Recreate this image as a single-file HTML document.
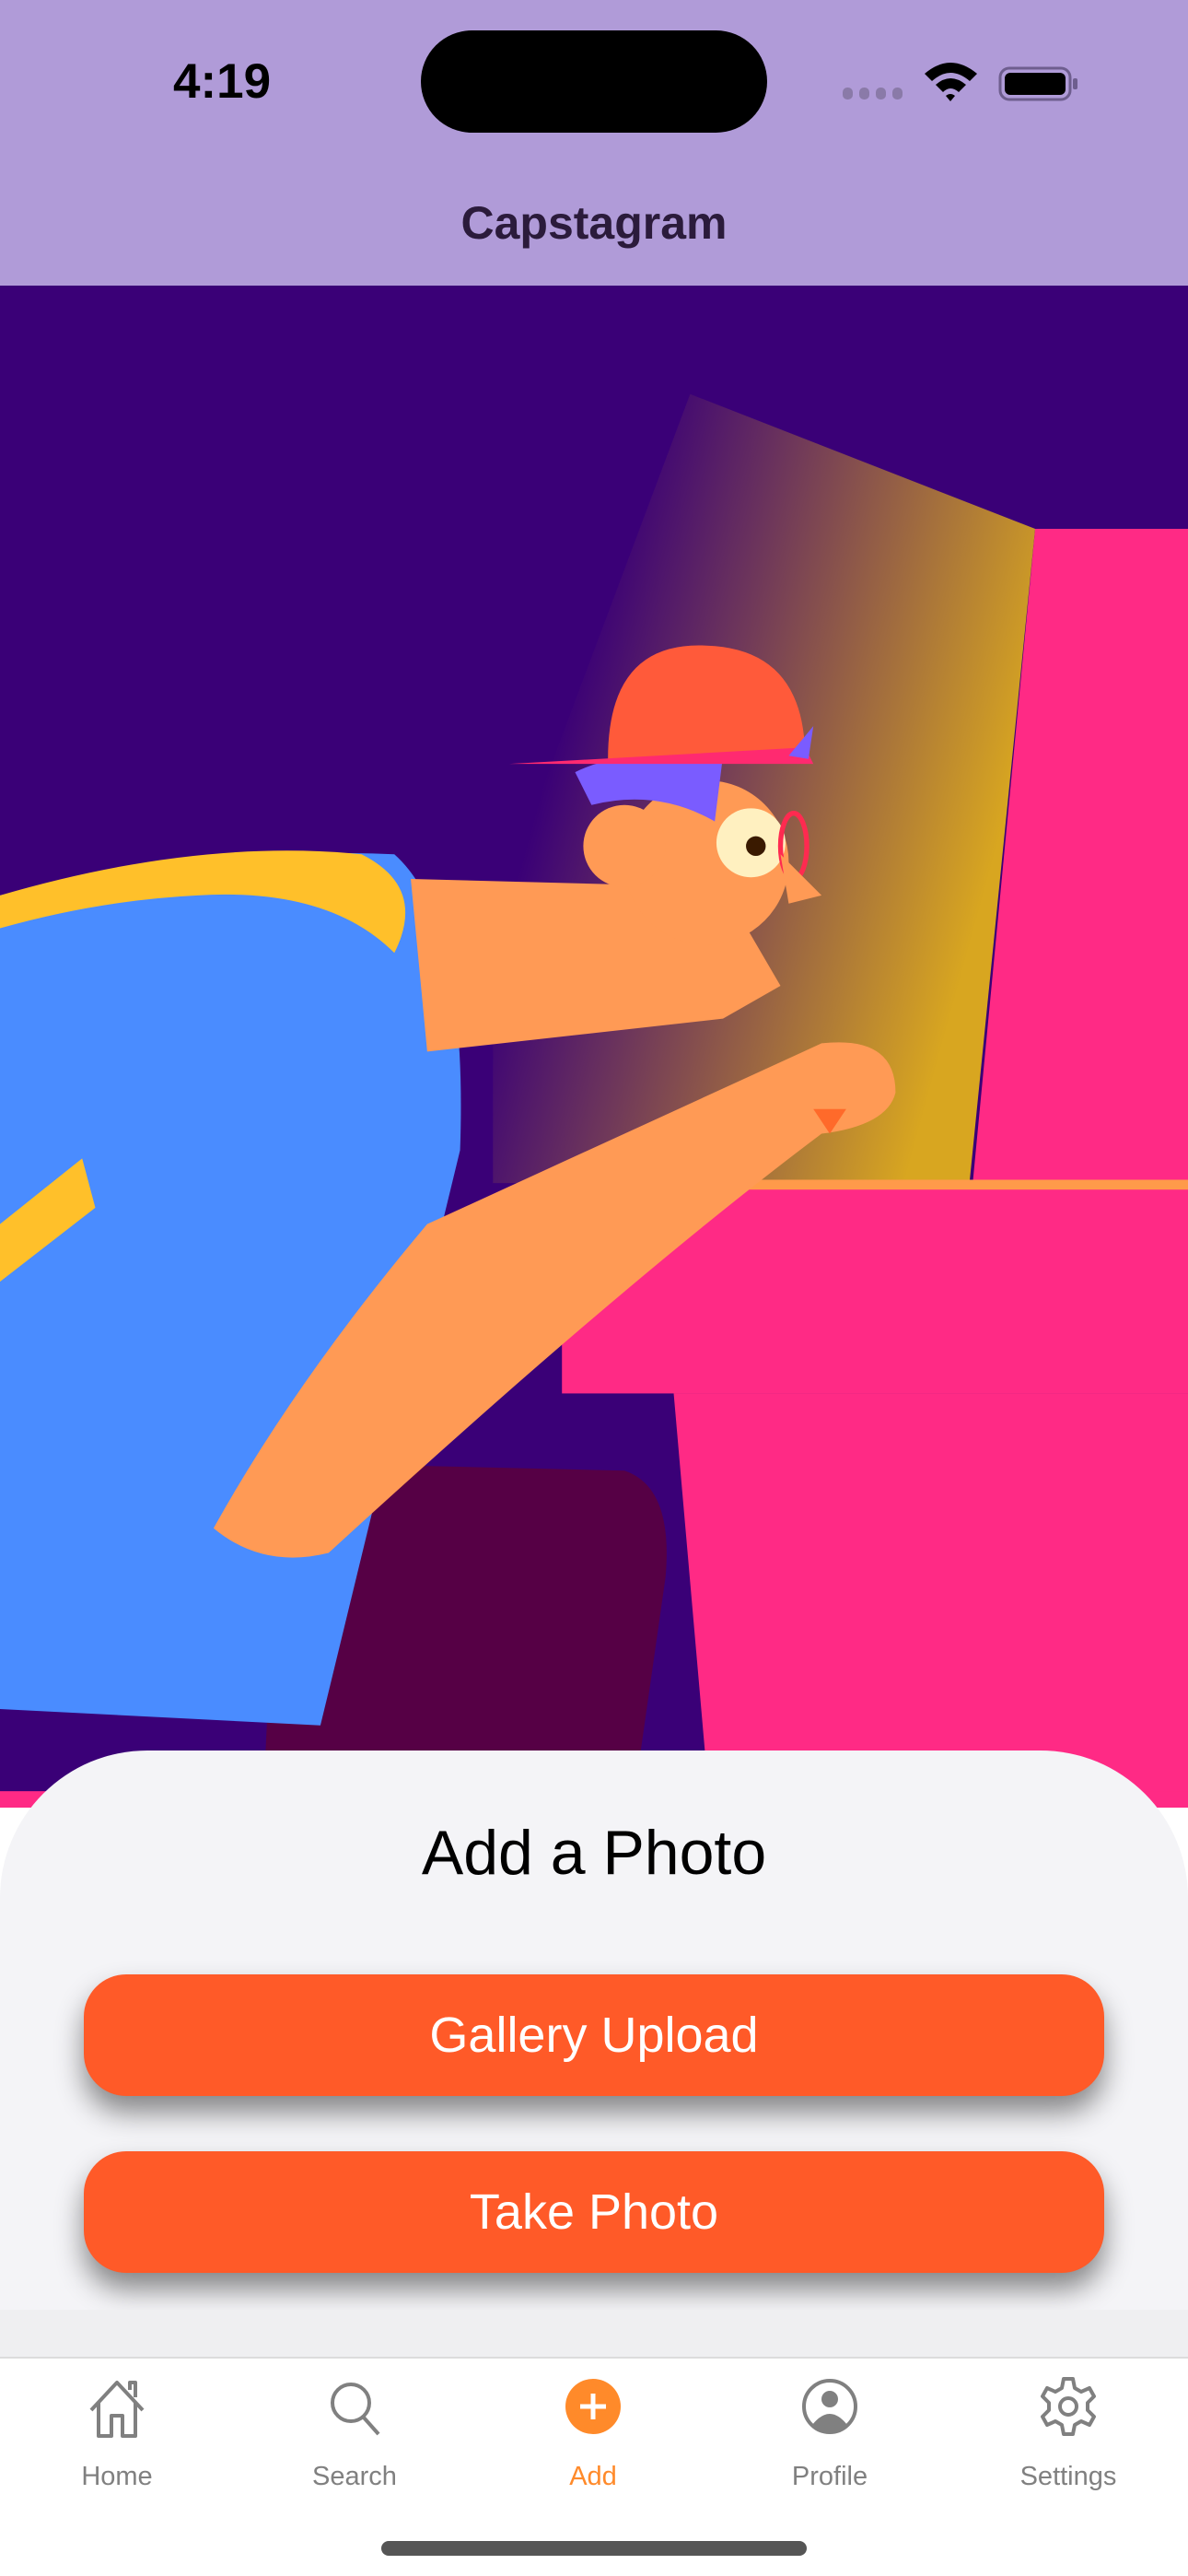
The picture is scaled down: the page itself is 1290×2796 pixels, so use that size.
<!DOCTYPE html>
<html><head><meta charset="utf-8">
<style>
*{margin:0;padding:0;box-sizing:border-box}
body{width:1290px;height:2796px;position:relative;overflow:hidden;background:#fff;font-family:"Liberation Sans",sans-serif}
.hdr{position:absolute;left:0;top:0;width:1290px;height:311px;background:#b09bd8}
.time{position:absolute;left:188px;top:58px;font-size:53px;font-weight:bold;color:#000}
.island{position:absolute;left:457px;top:33px;width:376px;height:111px;background:#000;border-radius:56px}
.title{position:absolute;left:0;width:1290px;top:213px;text-align:center;font-size:50px;font-weight:bold;color:#2b1b3b}
.ill{position:absolute;left:0;top:310px}
.sheet{position:absolute;left:0;top:1900px;width:1290px;height:660px;background:#f4f4f7;border-radius:160px 160px 0 0}
.sheet h1{position:absolute;top:72px;width:100%;text-align:center;font-size:68px;font-weight:normal;color:#000}
.btn{position:absolute;left:91px;width:1108px;height:132px;background:#ff5a28;border-radius:46px;color:#fff;font-size:54px;text-align:center;line-height:132px;box-shadow:0 18px 30px rgba(0,0,0,.45)}
.tab{position:absolute;left:0;top:2558px;width:1290px;height:238px;background:#fff;border-top:2px solid #dcdcdc}
.it{position:absolute;top:0;width:200px;margin-left:-100px;text-align:center}
.it svg{position:absolute;left:68px;top:20px}
.it span{position:absolute;top:112px;left:0;width:200px;font-size:29px;color:#808080}
.bar{position:absolute;left:414px;top:2758px;width:462px;height:16px;border-radius:8px;background:#555}
</style></head><body>
<div class="hdr">
<div class="time">4:19</div>
<div class="island"></div>
<svg style="position:absolute;left:912px;top:62px" width="270" height="52" viewBox="0 0 270 52">
<g fill="#8a7aa8"><rect x="3" y="33" width="11" height="13" rx="5"/><rect x="21" y="33" width="11" height="13" rx="5"/><rect x="39" y="33" width="11" height="13" rx="5"/><rect x="57" y="33" width="11" height="13" rx="5"/></g>
<path d="M92 18 Q120 -6 149 18 L141 26 Q120 8 100 26Z M104 30 Q120 16 137 30 L129 38 Q120 30 112 38Z M120 48 L115 42 Q120 38 125 42Z" fill="#000"/>
<rect x="174" y="12" width="76" height="34" rx="10" fill="none" stroke="#6e5e8e" stroke-width="3"/>
<rect x="179" y="17" width="66" height="24" rx="6" fill="#000"/>
<rect x="253" y="23" width="5" height="12" rx="2" fill="#6e5e8e"/>
</svg>
<div class="title">Capstagram</div>
</div>
<svg class="ill" width="1290" height="1652" viewBox="0 174 723 926" preserveAspectRatio="none">
<defs>
<linearGradient id="beam" x1="0" y1="0" x2="1" y2="0.4"><stop offset="0.25" stop-color="#3a0077"/><stop offset="1" stop-color="#d8a620"/></linearGradient>
</defs>
<rect x="0" y="174" width="723" height="926" fill="#3a0077"/>
<polygon points="420,240 630,322 590,720 300,720 300,560" fill="url(#beam)"/>
<polygon points="630,322 723,322 723,720 592,720" fill="#ff2a85"/>
<rect x="342" y="718" width="381" height="130" fill="#ff2a85"/>
<rect x="342" y="718" width="381" height="6" fill="#ff9a4a"/>
<polygon points="410,848 723,848 723,1100 432,1100" fill="#ff2a85"/>
<path d="M170 890 L380 895 Q410 905 405 960 L385 1100 L160 1100Z" fill="#560045"/>
<path d="M0 545 Q120 515 240 520 Q285 560 280 700 L195 1050 L0 1040Z" fill="#4a8cff"/>
<path d="M0 545 Q120 510 220 520 Q260 540 240 580 Q200 540 120 545 Q60 548 0 565Z" fill="#ffc02a"/>
<polygon points="0,745 50,705 58,735 0,780" fill="#ffc02a"/>
<polygon points="250,535 440,540 475,600 440,620 260,640" fill="#ff9a55"/>
<circle cx="430" cy="525" r="50" fill="#ff9a55"/>
<circle cx="380" cy="515" r="25" fill="#ff9a55"/>
<path d="M350 470 Q380 455 440 460 L435 500 Q400 480 360 490Z" fill="#7a5cff"/>
<path d="M370 462 Q370 390 430 393 Q490 395 490 462Z" fill="#ff5a3a"/>
<polygon points="310,465 490,455 495,465 310,465" fill="#ff2a70"/>
<path d="M480 460 L495 442 L492 462Z" fill="#7a5cff"/>
<circle cx="457" cy="513" r="21" fill="#fff0c0"/>
<circle cx="460" cy="515" r="6" fill="#3a1a00"/>
<ellipse cx="483" cy="515" rx="8" ry="20" fill="none" stroke="#ff2a50" stroke-width="3"/>
<path d="M475 520 L500 545 L480 550Z" fill="#ff9a55"/>
<path d="M260 745 Q380 690 500 635 Q545 630 545 665 Q540 685 500 690 Q380 780 200 945 Q160 955 130 930 Q180 840 260 745Z" fill="#ff9a55"/>
<path d="M495 675 L515 675 L505 690Z" fill="#ff6a2a"/>
<rect x="0" y="1090" width="723" height="10" fill="#ff2a85"/>
</svg>
<div class="sheet">
<h1>Add a Photo</h1>
<div class="btn" style="top:243px">Gallery Upload</div>
<div class="btn" style="top:435px">Take Photo</div>
</div>
<div style="position:absolute;left:0;top:2507px;width:1290px;height:51px;background:#efeff1"></div>
<div class="tab">
<div class="it" style="left:127px"><svg width="64" height="70" viewBox="0 0 64 70"><path d="M4 36 L32 6 L60 36 M12 28 V64 H26 V42 H38 V64 H52 V28 M46 14 V6 H52 V22" fill="none" stroke="#808080" stroke-width="4" stroke-linejoin="round"/></svg><span>Home</span></div>
<div class="it" style="left:385px"><svg width="64" height="70" viewBox="0 0 64 70"><circle cx="28" cy="28" r="20" fill="none" stroke="#808080" stroke-width="4"/><path d="M42 44 L58 62" stroke="#808080" stroke-width="4"/></svg><span>Search</span></div>
<div class="it" style="left:644px"><svg width="64" height="70" viewBox="0 0 64 70"><circle cx="32" cy="32" r="30" fill="#ff8a2a"/><path d="M32 18 V46 M18 32 H46" stroke="#fff" stroke-width="5"/></svg><span style="color:#ff8a2a">Add</span></div>
<div class="it" style="left:901px"><svg width="64" height="70" viewBox="0 0 64 70"><circle cx="32" cy="32" r="28" fill="none" stroke="#808080" stroke-width="4"/><circle cx="32" cy="24" r="9" fill="#808080"/><path d="M13 52 Q32 28 51 52 Q32 66 13 52Z" fill="#808080"/></svg><span>Profile</span></div>
<div class="it" style="left:1160px"><svg width="64" height="70" viewBox="0 0 64 70"><path d="M27 2 H37 L39 12 L46 16 L55 12 L60 21 L53 28 V36 L60 43 L55 52 L46 48 L39 52 L37 62 H27 L25 52 L18 48 L9 52 L4 43 L11 36 V28 L4 21 L9 12 L18 16 L25 12Z" fill="none" stroke="#808080" stroke-width="4" stroke-linejoin="round"/><circle cx="32" cy="32" r="9" fill="none" stroke="#808080" stroke-width="4"/></svg><span>Settings</span></div>
</div>
<div class="bar"></div>
</body></html>
